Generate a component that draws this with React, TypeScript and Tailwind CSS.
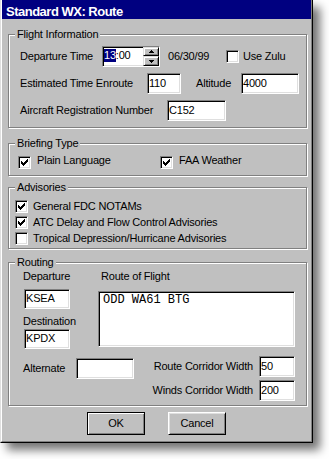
import React from "react";

const sunken =
  "bg-white border border-t-[#808080] border-l-[#808080] border-r-white border-b-white shadow-[inset_1px_1px_0_#000,inset_-1px_-1px_0_#dfdfdf]";

function Edit({ value, className }: { value?: React.ReactNode; className: string }) {
  return (
    <div className={`flex items-center pb-[1px] pl-[1px] ${sunken} ${className}`}>
      {value}
    </div>
  );
}

function Check({ checked }: { checked?: boolean }) {
  return (
    <span className={`flex h-[13px] w-[13px] shrink-0 items-center justify-center ${sunken}`}>
      {checked && (
        <svg width="7" height="7" viewBox="0 0 7 7" shapeRendering="crispEdges">
          <path
            d="M0 2h1v3H0zM1 3h1v3H1zM2 4h1v3H2zM3 3h1v3H3zM4 2h1v3H4zM5 1h1v3H5zM6 0h1v3H6z"
            fill="#000"
          />
        </svg>
      )}
    </span>
  );
}

function Group({
  title,
  className,
  children,
}: {
  title: string;
  className: string;
  children: React.ReactNode;
}) {
  return (
    <div
      className={`relative w-[299px] border border-[#808080] shadow-[inset_1px_1px_0_#fff,1px_1px_0_#fff] ${className}`}
    >
      <span className="absolute left-[6px] top-[-7px] bg-[#c0c0c0] px-[2px] leading-[13px]">
        {title}
      </span>
      {children}
    </div>
  );
}

function SpinButton({ up }: { up?: boolean }) {
  return (
    <span
      className={`flex w-[16px] items-center justify-center border border-t-[#dfdfdf] border-l-[#dfdfdf] border-r-black border-b-black bg-[#c0c0c0] shadow-[inset_1px_1px_0_#fff,inset_-1px_-1px_0_#808080] ${
        up ? "h-[9px]" : "h-[10px]"
      }`}
    >
      <svg width="5" height="3" viewBox="0 0 5 3" shapeRendering="crispEdges">
        <path
          d={up ? "M2 0h1v1H2zM1 1h3v1H1zM0 2h5v1H0z" : "M0 0h5v1H0zM1 1h3v1H1zM2 2h1v1H2z"}
          fill="#000"
        />
      </svg>
    </span>
  );
}

const advisories = [
  { label: "General FDC NOTAMs", checked: true },
  { label: "ATC Delay and Flow Control Advisories", checked: true },
  { label: "Tropical Depression/Hurricane Advisories", checked: false },
];

export default function App() {
  return (
    <div className="h-[459px] w-[329px] bg-white font-['Liberation_Sans',Arial,sans-serif] text-[11px] leading-[13px] tracking-[-0.2px] text-black">
      <div className="w-[313px] border-b border-l border-r border-b-black border-l-[#dfdfdf] border-r-black shadow-[7px_7px_9px_rgba(0,0,0,0.55)]">
        <div className="border-b border-l border-r border-b-[#808080] border-l-white border-r-[#808080] bg-[#c0c0c0]">
          <div className="h-[19px] bg-[#000080] pl-[4px] pt-[4px] text-[13px] font-bold leading-[16px] tracking-[-0.5px] text-white">
            Standard WX: Route
          </div>

          <div className="pb-[6px] pl-[6px] pr-[4px]">
            <Group title="Flight Information" className="mt-[15px] h-[94px] pl-[11px] pt-[11px]">
              <div className="flex h-[21px] items-center">
                <span className="w-[82px]">Departure Time</span>
                <div className={`flex h-[21px] w-[58px] ${sunken}`}>
                  <span className="flex flex-1 items-center pb-[2px] pl-[1px]">
                    <span className="bg-[#000080] text-white">13</span>:00
                  </span>
                  <span className="flex flex-col">
                    <SpinButton up />
                    <SpinButton />
                  </span>
                </div>
                <span className="ml-[8px] w-[58px]">06/30/99</span>
                <Check />
                <span className="ml-[4px]">Use Zulu</span>
              </div>
              <div className="mt-[6px] flex h-[21px] items-center">
                <span className="w-[127px]">Estimated Time Enroute</span>
                <Edit className="h-[21px] w-[34px]" value="110" />
                <span className="ml-[15px] w-[45px]">Altitude</span>
                <Edit className="h-[21px] w-[58px]" value="4000" />
              </div>
              <div className="mt-[6px] flex h-[21px] items-center">
                <span className="w-[147px]">Aircraft Registration Number</span>
                <Edit className="h-[21px] w-[59px]" value="C152" />
              </div>
            </Group>

            <Group title="Briefing Type" className="mt-[15px] flex h-[33px] items-start pl-[9px] pt-[12px]">
              <div className="flex w-[142px] items-start gap-[6px]">
                <Check checked />
                <span className="-mt-[2px]">Plain Language</span>
              </div>
              <div className="flex items-start gap-[6px]">
                <Check checked />
                <span className="-mt-[2px]">FAA Weather</span>
              </div>
            </Group>

            <Group title="Advisories" className="mt-[11px] flex h-[62px] flex-col gap-[3px] pl-[6px] pt-[12px]">
              {advisories.map((a) => (
                <div key={a.label} className="flex items-start gap-[5px]">
                  <Check checked={a.checked} />
                  <span>{a.label}</span>
                </div>
              ))}
            </Group>

            <Group title="Routing" className="mt-[13px] h-[144px] pl-[14px] pr-[11px] pt-[7px]">
              <div className="flex">
                <div className="flex w-[81px] flex-col items-start">
                  <span>Departure</span>
                  <Edit className="ml-[1px] mt-[6px] h-[20px] w-[46px]" value="KSEA" />
                  <span className="mt-[6px]">Destination</span>
                  <Edit className="ml-[1px] mt-[1px] h-[20px] w-[46px]" value="KPDX" />
                </div>
                <div className="flex flex-col items-start">
                  <span className="ml-[3px]">Route of Flight</span>
                  <div
                    className={`mt-[8px] h-[56px] w-[197px] pl-[4px] pt-[1px] font-['Liberation_Mono',monospace] text-[12px] leading-[14px] tracking-normal ${sunken}`}
                  >
                    ODD WA61 BTG
                  </div>
                </div>
              </div>
              <div className="mt-[7px] flex items-start justify-between">
                <div className="mt-[2px] flex items-center">
                  <span className="w-[53px]">Alternate</span>
                  <Edit className="h-[21px] w-[58px]" />
                </div>
                <div className="grid grid-cols-[auto_36px] items-center gap-x-[6px] gap-y-[3px]">
                  <span className="text-right">Route Corridor Width</span>
                  <Edit className="h-[21px] w-[36px]" value="50" />
                  <span className="text-right">Winds Corridor Width</span>
                  <Edit className="h-[21px] w-[36px]" value="200" />
                </div>
              </div>
            </Group>

            <div className="mt-[6px] flex gap-[23px] pl-[79px]">
              <button className="h-[23px] w-[58px] border border-black bg-[#c0c0c0] pb-[1px] shadow-[inset_1px_1px_0_#fff,inset_-1px_-1px_0_#808080]">
                OK
              </button>
              <button className="h-[23px] w-[58px] border border-b-black border-l-white border-r-black border-t-white bg-[#c0c0c0] pb-[1px] shadow-[inset_1px_1px_0_#dfdfdf,inset_-1px_-1px_0_#808080]">
                Cancel
              </button>
            </div>
          </div>
        </div>
      </div>
    </div>
  );
}
